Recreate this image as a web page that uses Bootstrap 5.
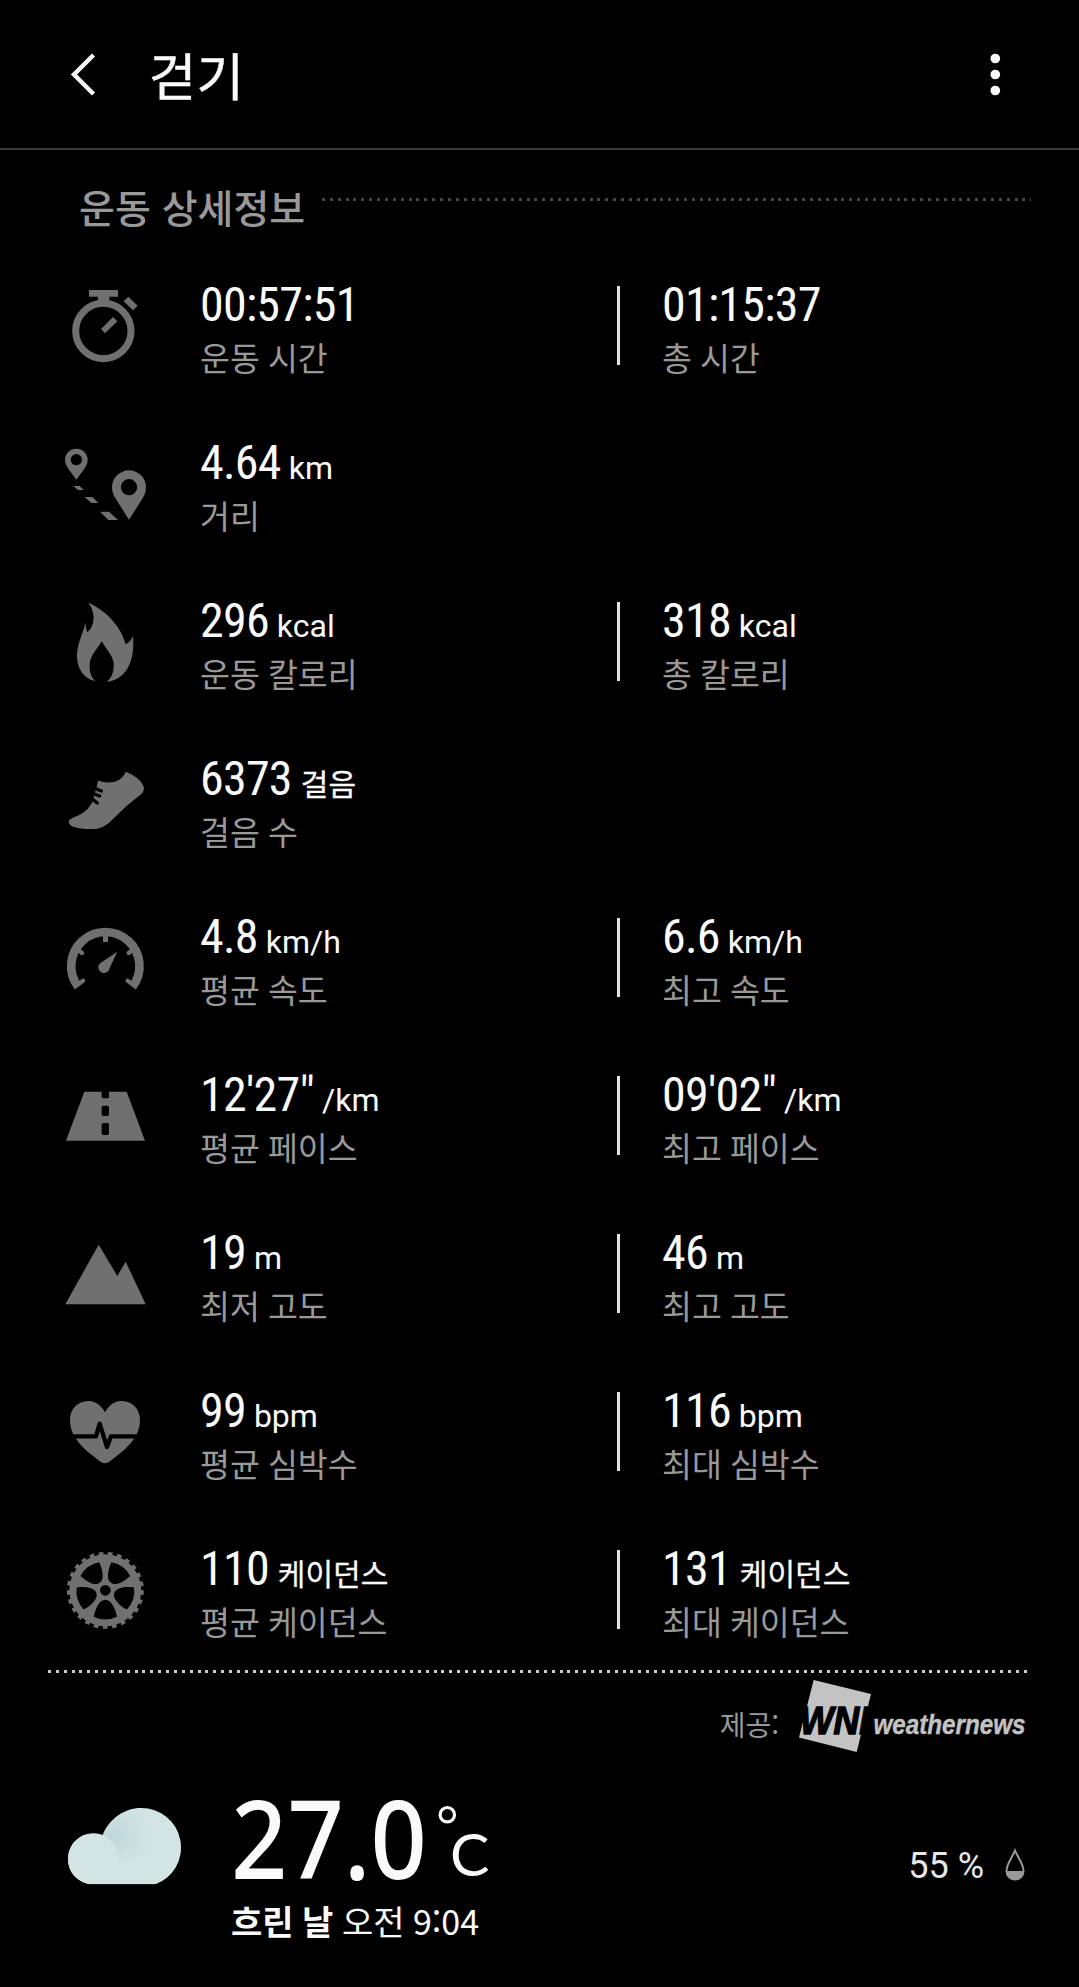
<!DOCTYPE html>
<html lang="ko">
<head>
<meta charset="utf-8">
<meta name="viewport" content="width=device-width, initial-scale=1">
<title>걷기</title>
<link rel="stylesheet" href="https://cdn.jsdelivr.net/npm/bootstrap@5.3.0/dist/css/bootstrap.min.css">
<style>
  body { background: #000; color: #fafafa; font-family: Roboto, "Noto Sans CJK KR", sans-serif; }
  .screen { width: 1079px; height: 1987px; }
  .kr { font-family: "Noto Sans CJK KR", sans-serif; }
  .topbar { height: 150px; border-bottom: 2px solid #3a3a3a; padding: 0 62px 0 66px; }
  .topbar h1 { font-size: 51.5px; line-height: 74px; margin: 0 0 0 51px; font-weight: 400; -webkit-text-stroke: .5px #fafafa; }
  .sec-head { height: 131px; padding: 26px 48px 0 79px; }
  .sec-head h2 { font-size: 39px; line-height: 60px; font-weight: 500; color: #999; margin: 0 17px 0 0; }
  .dots { height: 3px; background: repeating-linear-gradient(90deg, currentColor 0 3px, transparent 3px 7.87px); }
  .sec-head .dots { color: #444; margin-top: 22px; }
  .metric { height: 158px; padding-left: 64px; }
  .metric svg { width: 84px; height: 84px; margin-top: 5px; fill: #707070; }
  .cell-a { width: 417px; margin-left: 52px; }
  .cell-b { border-left: 3px solid #e2e2e2; height: 79px; margin-top: 5px; padding-left: 42px; }
  .cell-b > div { margin-top: -5px; }
  .val { font-size: 48px; line-height: 48px; height: 49px; letter-spacing: -.75px; font-family: "Roboto Condensed", Roboto, sans-serif; font-stretch: condensed; white-space: nowrap; }
  .unit { font-family: Roboto, sans-serif; font-size: 32px; line-height: 0; letter-spacing: 0; font-stretch: normal; margin-left: 8px; }
  .unit.kr { font-family: "Noto Sans CJK KR", sans-serif; font-size: 30px; -webkit-text-stroke: .3px #fafafa; margin-left: 9px; }
  .lbl { font-size: 32.5px; line-height: 54px; color: #999; white-space: nowrap; word-spacing: -1px; }
  .foot-line { margin: -33px 51px 0 48px; color: #ccc; }
  .provider { height: 84px; padding-right: 52px; }
  .provider .kr { font-size: 28px; color: #999; line-height: 40px; margin: 31px 18px 0 0; }
  .provider svg, .temp svg { overflow: visible; }
  .weather { padding: 0 53px 0 65px; height: 200px; }
  .cloud { margin-top: 48px; }
  .temp { padding-top: 24px; margin-left: 40px; }
  .cond { font-size: 34px; line-height: 50px; margin: 5px 0 0 6px; word-spacing: -1px; }
  .humid { margin-top: 91px; height: 36px; }
  .humid span { font-size: 36px; line-height: 36px; margin-right: 20px; color: #e8e8e8; }
</style>
</head>
<body>
<main class="screen d-flex flex-column overflow-hidden">
  <header class="topbar d-flex align-items-center flex-shrink-0">
    <svg width="32" height="46" viewBox="0 0 32 46" fill="none" stroke="#fafafa" stroke-width="4.400"><path d="M27.500 4 8 23.500l19.500 19.500"/></svg>
    <h1 class="kr">걷기</h1>
    <svg class="ms-auto" width="44" height="46" viewBox="0 0 44 46" fill="#fafafa"><circle cx="22.300" cy="7.500" r="4.800"/><circle cx="22.300" cy="23.500" r="4.800"/><circle cx="22.300" cy="39.500" r="4.800"/></svg>
  </header>

  <div class="sec-head d-flex flex-shrink-0">
    <h2 class="kr">운동 상세정보</h2>
    <div class="dots flex-grow-1"></div>
  </div>

  <section class="flex-shrink-0">
    <div class="metric d-flex">
      <svg viewBox="72 78 252 252"><path d="M147 90h87v20h-26v14h-34v-14h-27zM265 110l28 27-14 14-28-27zM219 171l13 13-37 36-12-13z"/><circle cx="190" cy="213" r="83" fill="none" stroke="#707070" stroke-width="21"/></svg>
      <div class="cell-a"><div class="val">00:57:51</div><div class="lbl kr">운동 시간</div></div>
      <div class="cell-b"><div><div class="val">01:15:37</div><div class="lbl kr">총 시간</div></div></div>
    </div>
    <div class="metric d-flex">
      <svg viewBox="72 552 252 252"><path fill-rule="evenodd" d="M109 566a34 34 0 0 1 34 34c0 12-6 20-12 29l-22 30-22-30c-6-9-12-17-12-29a34 34 0 0 1 34-34zm0 16a17 17 0 1 0 0 34 17 17 0 0 0 0-34zM267 631a51 51 0 0 1 51 51c0 15-6 26-12 36l-39 61-39-61c-6-10-12-21-12-36a51 51 0 0 1 51-51zm0 26a24.500 24.500 0 1 0 0 49 24.500 24.500 0 0 0 0-49zM100 678h19l12 12h-17zM134 711h23l18 18h-21zM180 755h27l27 25h-29z"/></svg>
      <div class="cell-a"><div class="val">4.64<span class="unit">km</span></div><div class="lbl kr">거리</div></div>
    </div>
    <div class="metric d-flex">
      <svg viewBox="72 66 252 252"><path d="M145 68C198 92 243 138 257 193Q271 186 279 168C285 240 262 298 200 306C218 292 222 272 221 250C219 227 200 210 185 184C170 210 150 228 149 252C148 278 153 292 166 303C135 298 110 268 111 225C112 190 127 165 137 128Q137 146 142 157C165 137 168 98 145 68Z"/></svg>
      <div class="cell-a"><div class="val">296<span class="unit">kcal</span></div><div class="lbl kr">운동 칼로리</div></div>
      <div class="cell-b"><div><div class="val">318<span class="unit">kcal</span></div><div class="lbl kr">총 칼로리</div></div></div>
    </div>
    <div class="metric d-flex">
      <svg viewBox="72 540 252 252"><path d="M174 602Q200 611 225 605Q249 597 257 575C280 583 304 600 311 620Q314 632 304 642L262 676L222 714Q197 742 172 746C130 750 88 744 86 727C85 715 108 712 128 699Q145 688 156 669L170 620Z"/><path d="M168 626l16 7M163 642l16 6M159 659l13 10" fill="none" stroke="#000" stroke-width="10" stroke-linecap="round"/></svg>
      <div class="cell-a"><div class="val">6373<span class="unit kr">걸음</span></div><div class="lbl kr">걸음 수</div></div>
    </div>
    <div class="metric d-flex">
      <svg viewBox="72 54 252 252"><path d="M114.700 260.900A102.500 102.500 0 1 1 277.300 260.900" fill="none" stroke="#707070" stroke-width="26"/><path d="M189 106h15v20h-15zM232 155L209 204A17 17 0 1 1 180 190Z"/><path d="M112 148l14 11M280 148l-14 11M116 251l13-9M276 251l-13-9" stroke="#707070" stroke-width="13" stroke-linecap="round"/></svg>
      <div class="cell-a"><div class="val">4.8<span class="unit">km/h</span></div><div class="lbl kr">평균 속도</div></div>
      <div class="cell-b"><div><div class="val">6.6<span class="unit">km/h</span></div><div class="lbl kr">최고 속도</div></div></div>
    </div>
    <div class="metric d-flex">
      <svg viewBox="72 528 252 252"><path d="M133 575H260L315 722H78Z"/><g fill="#000"><rect x="185" y="568" width="22" height="27" rx="5"/><rect x="185" y="617" width="22" height="31" rx="5"/><rect x="185" y="669" width="22" height="36" rx="5"/></g></svg>
      <div class="cell-a"><div class="val">12'27"<span class="unit">/km</span></div><div class="lbl kr">평균 페이스</div></div>
      <div class="cell-b"><div><div class="val">09'02"<span class="unit">/km</span></div><div class="lbl kr">최고 페이스</div></div></div>
    </div>
    <div class="metric d-flex">
      <svg viewBox="72 72 252 252"><path d="M176 104L232 198 257 155 317 283H76Z"/></svg>
      <div class="cell-a"><div class="val">19<span class="unit">m</span></div><div class="lbl kr">최저 고도</div></div>
      <div class="cell-b"><div><div class="val">46<span class="unit">m</span></div><div class="lbl kr">최고 고도</div></div></div>
    </div>
    <div class="metric d-flex">
      <svg viewBox="72 546 252 252"><path d="M195 607C180 580 160 573 145 573C112 573 90 598 90 630C90 690 145 727 182 755Q195 764 208 755C245 727 300 690 300 630C300 598 277 573 246 573C228 573 210 580 195 607Z"/><path d="M88 679H168L179 641 201 711 213 679H304" fill="none" stroke="#000" stroke-width="13" stroke-linejoin="round"/></svg>
      <div class="cell-a"><div class="val">99<span class="unit">bpm</span></div><div class="lbl kr">평균 심박수</div></div>
      <div class="cell-b"><div><div class="val">116<span class="unit">bpm</span></div><div class="lbl kr">최대 심박수</div></div></div>
    </div>
    <div class="metric d-flex">
      <svg viewBox="102 90 252 252"><circle cx="226" cy="211" r="108"/><circle cx="226" cy="211" r="109" fill="none" stroke="#707070" stroke-width="13" stroke-dasharray="13.700 13.700"/>
        <g fill="#000"><circle cx="226" cy="211" r="16"/><path id="win" d="M226 239C208 239 196 266 191 290Q226 307 261 290C256 266 244 239 226 239Z"/><use href="#win" transform="rotate(72 226 211)"/><use href="#win" transform="rotate(144 226 211)"/><use href="#win" transform="rotate(216 226 211)"/><use href="#win" transform="rotate(288 226 211)"/></g></svg>
      <div class="cell-a"><div class="val">110<span class="unit kr">케이던스</span></div><div class="lbl kr">평균 케이던스</div></div>
      <div class="cell-b"><div><div class="val">131<span class="unit kr">케이던스</span></div><div class="lbl kr">최대 케이던스</div></div></div>
    </div>
  </section>

  <div class="dots foot-line flex-shrink-0"></div>
  <div class="provider d-flex justify-content-end align-items-start flex-shrink-0">
    <span class="kr">제공:</span>
    <svg width="230" height="84" viewBox="797 1673 230 84"><path fill="#c3c3c3" d="M813.700 1680L871 1694 856.700 1752 799 1737.500Z"/>
      <g font-family="Liberation Sans, sans-serif" font-weight="700" font-style="italic"><text x="800" y="1733.500" font-size="39.500" textLength="69" lengthAdjust="spacingAndGlyphs" stroke="#000" stroke-width="1.500">WNI</text><text x="873.500" y="1733.500" font-size="28.500" fill="#c3c3c3" stroke="#c3c3c3" stroke-width=".4" textLength="152" lengthAdjust="spacingAndGlyphs">weathernews</text></g></svg>
  </div>
  <div class="weather d-flex flex-shrink-0">
    <svg class="cloud" width="120" height="84" viewBox="75 135 360 252">
      <defs>
        <radialGradient id="shade" gradientUnits="userSpaceOnUse" cx="215" cy="235" r="120"><stop offset="0" stop-color="#c0d7da"/><stop offset=".5" stop-color="#c9dddf"/><stop offset="1" stop-color="#d3e4e5"/></radialGradient>
        <linearGradient id="fade" gradientUnits="userSpaceOnUse" x1="0" y1="260" x2="0" y2="325"><stop offset="0" stop-color="#d3e4e5" stop-opacity="0"/><stop offset="1" stop-color="#d3e4e5"/></linearGradient>
        <clipPath id="outline"><path d="M150 373C110 365 84 335 84 297A76 76 0 0 1 188 225C208 175 255 144 303 144A118 118 0 0 1 345 373Z"/></clipPath>
      </defs>
      <g clip-path="url(#outline)"><path fill="url(#shade)" d="M75 135h360v252H75z"/><path fill="url(#fade)" d="M75 260h360v127H75z"/><circle cx="160" cy="297" r="76" fill="#d3e4e5"/></g>
    </svg>
    <div class="temp">
      <svg class="d-block" width="270" height="110" viewBox="225 1780 270 110"><g fill="#fafafa"><text x="231" y="1878" font-family="Noto Sans, sans-serif" font-weight="500" font-size="109" textLength="196" lengthAdjust="spacingAndGlyphs">27.0</text><text x="450" y="1874.500" font-family="Lato, sans-serif" font-size="59">C</text></g><circle cx="447.300" cy="1813.700" r="7.200" fill="none" stroke="#fafafa" stroke-width="3.200"/></svg>
      <div class="kr text-nowrap cond"><b>흐린 날</b> 오전 9:04</div>
    </div>
    <div class="ms-auto d-flex humid"><span>55 %</span>
      <svg width="22" height="34" viewBox="0 0 22 34"><path d="M11 2.500C14 10 19.500 16 19.500 23A8.500 8.500 0 0 1 2.500 23C2.500 16 8 10 11 2.500Z" fill="none" stroke="#999" stroke-width="2"/><path d="M2 23H20A9 9 0 0 1 2 23Z" fill="#999"/></svg>
    </div>
  </div>
</main>
<script src="https://cdn.jsdelivr.net/npm/bootstrap@5.3.0/dist/js/bootstrap.bundle.min.js"></script>
</body>
</html>
